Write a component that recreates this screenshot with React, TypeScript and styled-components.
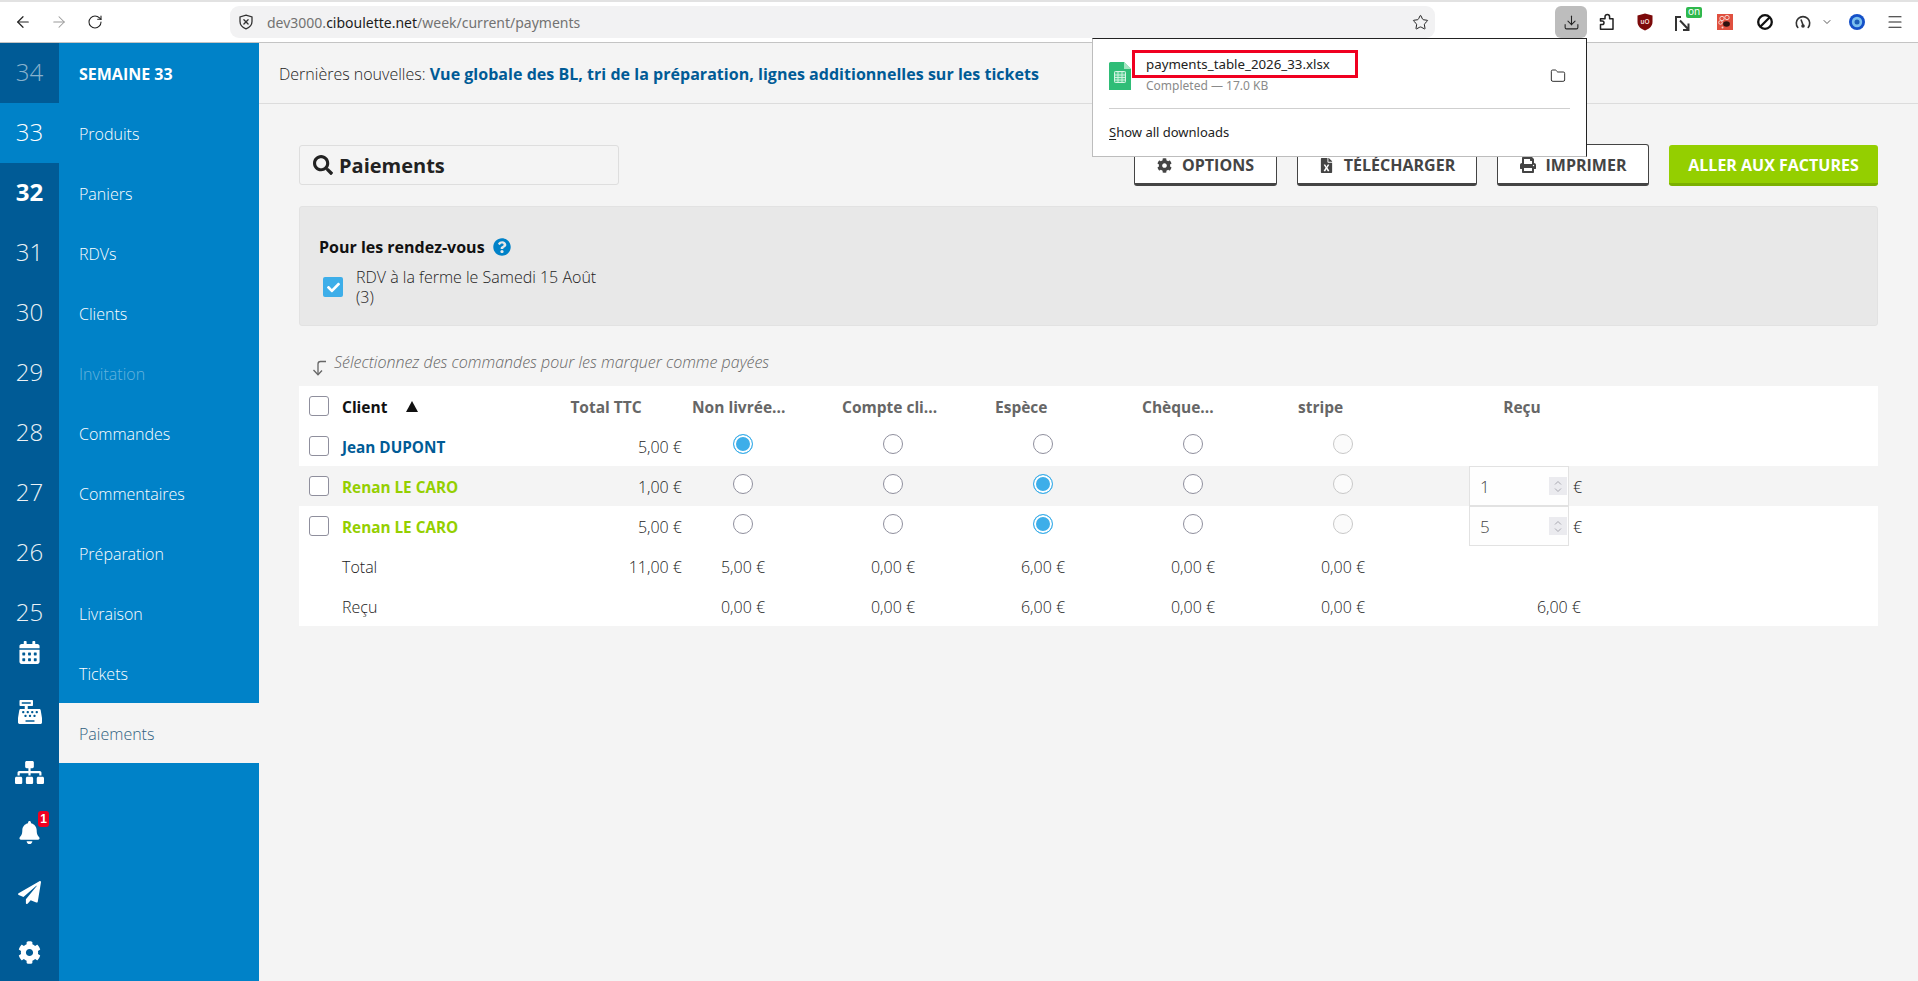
import React from "react";
import styled, { createGlobalStyle } from "styled-components";
import { ArrowLeft, ArrowRight, RotateCw, Star, Download, Folder, Menu, ChevronDown } from "lucide-react";
import { FaCalendarAlt, FaCashRegister, FaSitemap, FaBell, FaPaperPlane, FaCog, FaSearch, FaFileExcel, FaPrint, FaQuestionCircle, FaCheck } from "react-icons/fa";

const Global = createGlobalStyle`
  html, body { margin: 0; padding: 0; height: 100%; overflow: hidden; background: #f4f4f4; }
  * { box-sizing: border-box; }
  body { font-family: "Open Sans", "Noto Sans", sans-serif; color: #333; }
`;

const Page = styled.div`
  position: relative;
  width: 1918px;
  height: 981px;
  overflow: hidden;
  display: flex;
  flex-direction: column;
`;

/* ---------- browser chrome ---------- */
const Chrome = styled.header`
  height: 43px;
  flex: none;
  background: #fff;
  border-top: 2px solid #e2e2e2;
  border-bottom: 1px solid #c4c4c4;
  display: flex;
  align-items: center;
  padding-left: 5px;
  font-family: "Noto Sans", sans-serif;
`;
const NavBtn = styled.div<{ $dim?: boolean }>`
  width: 36px;
  height: 32px;
  display: flex;
  align-items: center;
  justify-content: center;
  color: ${(p) => (p.$dim ? "#9a9a9a" : "#222")};
`;
const UrlBar = styled.div`
  margin-left: 117px;
  width: 1205px;
  height: 32px;
  background: #f2f2f3;
  border-radius: 9px;
  display: flex;
  align-items: center;
  padding: 0 6px 0 8px;
  font-size: 14px;
  color: #727272;
`;
const UrlText = styled.span`
  margin-left: 13px;
  flex: 1;
  b { font-weight: 400; color: #1c1c1c; }
`;
const ToolIcons = styled.div`
  display: flex;
  align-items: center;
  margin-left: 120px;
`;
const DownloadBtn = styled.div`
  width: 32px;
  height: 32px;
  background: #bdbdbd;
  border-radius: 6px;
  display: flex;
  align-items: center;
  justify-content: center;
  color: #222;
`;
const Ext = styled.div<{ $w: number }>`
  position: relative;
  width: ${(p) => p.$w}px;
  height: 32px;
  display: flex;
  align-items: center;
  justify-content: center;
  color: #222;
`;
const OnBadge = styled.span`
  position: absolute;
  right: 5px;
  top: 1px;
  width: 16px;
  height: 11px;
  background: #2fb84c;
  color: #fff;
  font-size: 10px;
  line-height: 9px;
  text-align: center;
  border-radius: 2px;
`;

/* ---------- downloads popup ---------- */
const Popup = styled.div`
  position: absolute;
  left: 1092px;
  top: 38px;
  width: 495px;
  height: 119px;
  background: #fff;
  border: 1px solid #bdbdbd;
  border-top-color: #222;
  border-right-color: #222;
  z-index: 5;
  font-family: "Noto Sans", sans-serif;
  padding: 0 16px;
`;
const DownloadItem = styled.div`
  height: 70px;
  padding-top: 3px;
  display: flex;
  align-items: center;
  border-bottom: 1px solid #cfcfcf;
`;
const SheetSlot = styled.div`
  display: flex;
  margin-top: 2px;
`;
const FileInfo = styled.div`
  margin-left: 15px;
  flex: 1;
  display: flex;
  flex-direction: column;
  gap: 4px;
`;
const FileName = styled.span`
  font-size: 13.3px;
  line-height: 17px;
  color: #222;
`;
const FileMeta = styled.span`
  font-size: 12px;
  line-height: 17px;
  color: #8a8a8a;
`;
const FolderBtn = styled.div`
  width: 16px;
  margin: 2px 4px 0 0;
  display: flex;
  color: #222;
`;
const ShowAll = styled.div`
  margin-top: 14px;
  font-size: 13px;
  line-height: 18px;
  color: #222;
  u { text-underline-offset: 2px; }
`;
const RedBox = styled.div`
  position: absolute;
  left: 1132px;
  top: 50px;
  width: 226px;
  height: 28px;
  border: 3px solid #f00020;
  z-index: 6;
`;

/* ---------- app shell ---------- */
const Body = styled.div`
  flex: 1;
  display: flex;
  min-height: 0;
`;
const WeekRail = styled.aside`
  width: 59px;
  flex: none;
  background: #005b96;
  display: flex;
  flex-direction: column;
`;
const WeekList = styled.div`
  height: 579px;
  flex: none;
  overflow: hidden;
`;
const WeekItem = styled.div<{ $state?: "active" | "bold" | "dim" }>`
  height: 60px;
  padding-bottom: 2px;
  display: flex;
  align-items: center;
  justify-content: center;
  font-size: 24px;
  line-height: 20px;
  font-weight: ${(p) => (p.$state === "bold" ? 700 : 300)};
  color: ${(p) => (p.$state === "dim" ? "rgba(255,255,255,.55)" : "#fff")};
  background: ${(p) => (p.$state === "active" ? "#0082c8" : "transparent")};
  opacity: ${(p) => (p.$state ? 1 : 0.92)};
`;
const RailTool = styled.div`
  position: relative;
  height: 60px;
  flex: none;
  display: flex;
  align-items: center;
  justify-content: center;
  color: #fff;
`;
const Badge = styled.span`
  position: absolute;
  left: 38px;
  top: 9px;
  width: 11px;
  height: 16px;
  border-radius: 3px;
  background: #f00020;
  color: #fff;
  font: 700 12px/16px "Liberation Sans", sans-serif;
  text-align: center;
`;
const NavRail = styled.nav`
  width: 200px;
  flex: none;
  background: #0082c8;
`;
const NavTitle = styled.div`
  height: 60px;
  padding: 2px 0 0 20px;
  display: flex;
  align-items: center;
  font-size: 16px;
  font-weight: 700;
  color: #fff;
`;
const NavItem = styled.div<{ $active?: boolean; $disabled?: boolean }>`
  height: 60px;
  padding: 2px 0 0 20px;
  display: flex;
  align-items: center;
  font-size: 16px;
  font-weight: 300;
  color: ${(p) => (p.$active ? "#2f5f80" : p.$disabled ? "rgba(255,255,255,.4)" : "#fff")};
  background: ${(p) => (p.$active ? "#f4f4f4" : "transparent")};
`;
const Main = styled.main`
  flex: 1;
  min-width: 0;
  background: #f4f4f4;
`;
const NewsBar = styled.div`
  height: 61px;
  padding: 1px 0 0 20px;
  border-bottom: 1px solid #dcdcdc;
  display: flex;
  align-items: center;
  font-size: 16px;
  font-weight: 300;
  color: #222;
  white-space: pre;
  a { font-weight: 700; color: #005b96; letter-spacing: 0.03px; }
`;
const Content = styled.div`
  padding: 40px 40px 0;
`;
const TitleRow = styled.div`
  display: flex;
  align-items: flex-start;
  justify-content: space-between;
`;
const SearchBox = styled.div`
  margin-top: 1px;
  width: 320px;
  height: 40px;
  border: 1px solid #dedede;
  border-radius: 3px;
  background: #f4f4f4;
  display: flex;
  align-items: center;
  gap: 6px;
  padding-left: 13px;
  font-size: 20px;
  font-weight: 700;
  color: #222;
`;
const Actions = styled.div`
  display: flex;
  gap: 20px;
`;
const OutlineBtn = styled.button<{ $w: number }>`
  width: ${(p) => p.$w}px;
  height: 42px;
  background: #fff;
  border: 1px solid #444;
  border-bottom-width: 3px;
  border-radius: 3px;
  display: flex;
  align-items: center;
  justify-content: center;
  gap: 10px;
  font: 700 16px "Open Sans", sans-serif;
  color: #444;
  padding: 2px 0 0;
`;
const GreenBtn = styled.button`
  margin-top: 1px;
  width: 209px;
  height: 41px;
  background: #94cf00;
  border: 0;
  border-bottom: 3px solid #7bb000;
  border-radius: 3px;
  font: 700 16px "Open Sans", sans-serif;
  color: #fff;
  padding: 2px 0 0;
`;
const FilterPanel = styled.section`
  margin-top: 20px;
  height: 120px;
  background: #e8e8e8;
  border: 1px solid #e2e2e2;
  border-radius: 3px;
  padding: 29px 19px 0;
`;
const PanelTitle = styled.div`
  display: flex;
  align-items: center;
  gap: 8px;
  font-size: 16px;
  line-height: 22px;
  font-weight: 700;
  color: #111;
  svg { color: #0082c8; }
`;
const PanelOption = styled.label`
  margin-top: 9px;
  padding-left: 4px;
  display: flex;
  align-items: center;
  gap: 13px;
  font-size: 16px;
  line-height: 20px;
  font-weight: 300;
  color: #222;
`;
const OptionText = styled.span`
  width: 255px;
`;
const BlueCheck = styled.span`
  width: 20px;
  height: 20px;
  flex: none;
  border-radius: 2px;
  background: #3daee9;
  color: #fff;
  display: flex;
  align-items: center;
  justify-content: center;
`;
const Hint = styled.div`
  height: 60px;
  padding: 24px 0 0 12px;
  display: flex;
  align-items: flex-start;
  gap: 7px;
  font-size: 16px;
  line-height: 24px;
  font-style: italic;
  font-weight: 300;
  color: #666;
`;

/* ---------- table ---------- */
const Table = styled.div`
  background: #fff;
`;
const Row = styled.div<{ $shade?: boolean }>`
  height: 40px;
  display: grid;
  grid-template-columns: 43px 188px 138px repeat(5, 150px) 208px;
  align-items: center;
  background: ${(p) => (p.$shade ? "#f4f4f4" : "transparent")};
  font-size: 16px;
  font-weight: 300;
  color: #222;
`;
const CheckCell = styled.div`
  padding-left: 10px;
  display: flex;
`;
const EmptyBox = styled.span`
  width: 20px;
  height: 20px;
  border: 1px solid #8f8f9d;
  border-radius: 3px;
  background: #fff;
`;
const HeadClient = styled.div`
  display: flex;
  align-items: center;
  gap: 19px;
  padding-top: 2px;
  font-weight: 700;
  font-size: 15.5px;
  color: #111;
`;
const SortArrow = styled.span`
  width: 0;
  height: 0;
  margin-top: -2px;
  border-left: 6px solid transparent;
  border-right: 6px solid transparent;
  border-bottom: 11px solid #111;
`;
const HeadCell = styled.div<{ $left?: number }>`
  padding: 2px 0 0 ${(p) => p.$left ?? 0}px;
  text-align: ${(p) => (p.$left === undefined ? "center" : "left")};
  font-weight: 700;
  font-size: 15.5px;
  white-space: nowrap;
  color: #666;
`;
const HeadTotal = styled(HeadCell)`
  padding-left: 14px;
`;
const ClientName = styled.div<{ $green?: boolean }>`
  padding-top: 2px;
  font-weight: 700;
  font-size: 15.3px;
  color: ${(p) => (p.$green ? "#94cf00" : "#005b96")};
`;
const LabelCell = styled.div`
  padding-top: 2px;
`;
const AmountCell = styled.div`
  padding-top: 2px;
  text-align: right;
  margin-right: -14px;
`;
const CenterCell = styled.div`
  padding-top: 2px;
  text-align: center;
`;
const RadioCell = styled.div`
  display: flex;
  justify-content: center;
  margin-bottom: 4px;
`;
const Radio = styled.span<{ $on?: boolean; $off?: boolean }>`
  width: 20px;
  height: 20px;
  border-radius: 50%;
  border: 1px solid ${(p) => (p.$on ? "#3daee9" : p.$off ? "#c8c8c8" : "#8f8f9d")};
  background: ${(p) => (p.$on ? "#3daee9" : p.$off ? "#fbfbfb" : "#fff")};
  box-shadow: ${(p) => (p.$on ? "inset 0 0 0 2px #fff" : "none")};
`;
const ReceivedCell = styled.div`
  height: 40px;
  padding-left: 51px;
  display: flex;
  align-items: center;
  gap: 4px;
`;
const NumberBox = styled.div`
  width: 100px;
  height: 40px;
  background: #fefefe;
  border: 1px solid #e2e2e2;
  display: flex;
  align-items: center;
  justify-content: space-between;
  padding: 0 1px 0 10px;
  font-size: 17px;
  color: #444;
`;
const Spinner = styled.span`
  width: 18px;
  height: 18px;
  background: #ebebef;
  color: #a8a8b0;
  display: flex;
  align-items: center;
  justify-content: center;
`;
const CurrencySign = styled.span`
  padding-top: 2px;
`;
const ReceivedTotal = styled.div`
  padding: 2px 45px 0 0;
  text-align: right;
`;

const ShieldX = () => (
  <svg width="16" height="16" viewBox="0 0 16 16" fill="none" stroke="#333" strokeWidth="1.3">
    <path d="M8 1.2 14 3v4.6c0 3.4-2.6 5.9-6 7.2-3.4-1.3-6-3.8-6-7.2V3z" />
    <path d="M5.9 5.8l4.2 4.2M10.1 5.8l-4.2 4.2" strokeLinecap="round" />
  </svg>
);
const PuzzleIcon = () => (
  <svg width="18" height="18" viewBox="0 0 18 18" fill="none" stroke="#222" strokeWidth="1.5" strokeLinejoin="round">
    <path d="M2.500 16.200V11.500H4.200a1.800 1.800 0 0 0 0-3.600H2.500V5.700H7V3.700a2.300 2.300 0 0 1 4.600 0V5.700H15V16.200Z" />
  </svg>
);
const UBlock = () => (
  <svg width="16" height="18" viewBox="0 0 16 18">
    <path d="M8 .5 15.500 2.600V9c0 4-3.200 7-7.500 8.500C3.700 16 .5 13 .5 9V2.600z" fill="#7c0a0a" />
    <text x="8" y="10.500" textAnchor="middle" fontSize="6.500" fontWeight="700" fill="#f2d8d8" fontFamily="Liberation Sans">uO</text>
  </svg>
);
const CursorOn = () => (
  <svg width="18" height="18" viewBox="0 0 18 18" fill="none" stroke="#333" strokeWidth="2" style={{ marginRight: 4, marginTop: 2 }}>
    <path d="M2 17V3h5" />
    <path d="M6 6.500l8 8.500M14.500 9.500v6.500H9" />
  </svg>
);
const BeeSquare = () => (
  <svg width="16" height="16" viewBox="0 0 16 16">
    <rect width="16" height="16" fill="#e0503f" />
    <circle cx="5" cy="4.500" r="2.200" fill="none" stroke="#f6d4ce" strokeWidth="1" />
    <circle cx="10" cy="3.500" r="2.200" fill="none" stroke="#f6d4ce" strokeWidth="1" />
    <circle cx="3.500" cy="8.500" r="1.800" fill="none" stroke="#f6d4ce" strokeWidth="1" />
    <ellipse cx="9.500" cy="10" rx="3.400" ry="2.800" fill="#2e1210" />
    <circle cx="5.500" cy="13.500" r="1" fill="#f6d4ce" />
  </svg>
);
const BanIcon = () => (
  <svg width="18" height="18" viewBox="0 0 18 18" fill="none" stroke="#111" strokeWidth="2.300">
    <circle cx="9" cy="9" r="6.800" />
    <path d="M4.500 13.500 13.500 4.500" />
  </svg>
);
const Gauge = () => (
  <svg width="16" height="16" viewBox="0 0 16 16" fill="none" stroke="#333" strokeWidth="1.600">
    <path d="M2.800 13.500A6.700 6.700 0 1 1 13.200 13.500" strokeLinecap="round" />
    <path d="M6 5.500 8 11" />
    <circle cx="8" cy="12" r="1.800" fill="#333" stroke="none" />
  </svg>
);
const BlueEye = () => (
  <svg width="16" height="16" viewBox="0 0 16 16">
    <circle cx="8" cy="8" r="8" fill="#1450c8" />
    <circle cx="8" cy="8" r="5.200" fill="#7cc0ee" />
    <circle cx="8" cy="8" r="2.500" fill="#1d5fb8" />
  </svg>
);
const Sheet = () => (
  <svg width="22" height="28" viewBox="0 0 22 28">
    <path d="M0 1.500A1.500 1.500 0 0 1 1.500 0H15l7 7v21H0z" fill="#2fbd77" />
    <path d="M15 0l7 7h-7z" fill="#a5e6c2" />
    <rect x="5.500" y="9.500" width="11" height="11" rx=".8" fill="#57cc92" stroke="#d8f5e5" strokeWidth="1" />
    <path d="M5.500 13h11M5.500 15.500h11M5.500 18h11M9 9.500v11M13 9.500v11" stroke="#d8f5e5" strokeWidth=".9" />
  </svg>
);
const HintArrow = () => (
  <svg width="16" height="16" viewBox="0 0 16 16" fill="none" stroke="#666" strokeWidth="1.300" style={{ marginTop: 10 }}>
    <path d="M15 1.500H9.500Q7 1.500 7 4v10.500" />
    <path d="M2.500 10 7 14.800 11 10.500" />
  </svg>
);
const Chevrons = () => (
  <svg width="10" height="15" viewBox="0 0 10 15" fill="none" stroke="currentColor" strokeWidth="1">
    <path d="M2 5.500 5 2.500 8 5.500M2 9.500 5 12.500 8 9.500" />
  </svg>
);

const weeks: { n: number; s?: "active" | "bold" | "dim" }[] = [
  { n: 34, s: "dim" }, { n: 33, s: "active" }, { n: 32, s: "bold" }, { n: 31 }, { n: 30 },
  { n: 29 }, { n: 28 }, { n: 27 }, { n: 26 }, { n: 25 },
];
const navItems = ["Produits", "Paniers", "RDVs", "Clients", "Invitation", "Commandes", "Commentaires", "Préparation", "Livraison", "Tickets", "Paiements"];

const rows = [
  { name: "Jean DUPONT", green: false, total: "5,00 €", checked: 0, recv: "" },
  { name: "Renan LE CARO", green: true, total: "1,00 €", checked: 2, recv: "1" },
  { name: "Renan LE CARO", green: true, total: "5,00 €", checked: 2, recv: "5" },
];
const heads = [
  { label: "Non livrée...", left: 24 },
  { label: "Compte cli...", left: 24 },
  { label: "Espèce", left: 27 },
  { label: "Chèque...", left: 24 },
  { label: "stripe", left: 30 },
];

export default function App() {
  return (
    <Page>
      <Global />
      <Chrome>
        <NavBtn><ArrowLeft size={18} strokeWidth={1.6} /></NavBtn>
        <NavBtn $dim><ArrowRight size={18} strokeWidth={1.4} /></NavBtn>
        <NavBtn><RotateCw size={16} strokeWidth={1.6} /></NavBtn>
        <UrlBar>
          <ShieldX />
          <UrlText>dev3000.<b>ciboulette.net</b>/week/current/payments</UrlText>
          <Star size={17} strokeWidth={1.4} color="#222" />
        </UrlBar>
        <ToolIcons>
          <DownloadBtn><Download size={17} strokeWidth={1.5} /></DownloadBtn>
          <Ext $w={40}><PuzzleIcon /></Ext>
          <Ext $w={36}><UBlock /></Ext>
          <Ext $w={44}><CursorOn /><OnBadge>on</OnBadge></Ext>
          <Ext $w={36}><BeeSquare /></Ext>
          <Ext $w={44}><BanIcon /></Ext>
          <Ext $w={32}><Gauge /></Ext>
          <Ext $w={16}><ChevronDown size={12} strokeWidth={1.5} /></Ext>
          <Ext $w={44}><BlueEye /></Ext>
          <Ext $w={32}><Menu size={18} strokeWidth={1.5} /></Ext>
        </ToolIcons>
      </Chrome>

      <Popup>
        <DownloadItem>
          <SheetSlot><Sheet /></SheetSlot>
          <FileInfo>
            <FileName>payments_table_2026_33.xlsx</FileName>
            <FileMeta>Completed — 17.0 KB</FileMeta>
          </FileInfo>
          <FolderBtn><Folder size={16} strokeWidth={1.4} /></FolderBtn>
        </DownloadItem>
        <ShowAll><u>S</u>how all downloads</ShowAll>
      </Popup>
      <RedBox />

      <Body>
        <WeekRail>
          <WeekList>
            {weeks.map((w) => <WeekItem key={w.n} $state={w.s}>{w.n}</WeekItem>)}
          </WeekList>
          <RailTool><FaCalendarAlt size={23} /></RailTool>
          <RailTool><FaCashRegister size={24} /></RailTool>
          <RailTool><FaSitemap size={29} /></RailTool>
          <RailTool><FaBell size={23} /><Badge>1</Badge></RailTool>
          <RailTool><FaPaperPlane size={23} /></RailTool>
          <RailTool><FaCog size={23} /></RailTool>
        </WeekRail>
        <NavRail>
          <NavTitle>SEMAINE 33</NavTitle>
          {navItems.map((n) => (
            <NavItem key={n} $active={n === "Paiements"} $disabled={n === "Invitation"}>{n}</NavItem>
          ))}
        </NavRail>
        <Main>
          <NewsBar>Dernières nouvelles: <a>Vue globale des BL, tri de la préparation, lignes additionnelles sur les tickets</a></NewsBar>
          <Content>
            <TitleRow>
              <SearchBox><FaSearch size={20} />Paiements</SearchBox>
              <Actions>
                <OutlineBtn $w={143}><FaCog size={15} />OPTIONS</OutlineBtn>
                <OutlineBtn $w={180}><FaFileExcel size={15} />TÉLÉCHARGER</OutlineBtn>
                <OutlineBtn $w={152}><FaPrint size={16} />IMPRIMER</OutlineBtn>
                <GreenBtn>ALLER AUX FACTURES</GreenBtn>
              </Actions>
            </TitleRow>
            <FilterPanel>
              <PanelTitle>Pour les rendez-vous <FaQuestionCircle size={18} /></PanelTitle>
              <PanelOption>
                <BlueCheck><FaCheck size={13} /></BlueCheck>
                <OptionText>RDV à la ferme le Samedi 15 Août (3)</OptionText>
              </PanelOption>
            </FilterPanel>
            <Hint><HintArrow />Sélectionnez des commandes pour les marquer comme payées</Hint>
            <Table>
              <Row>
                <CheckCell><EmptyBox /></CheckCell>
                <HeadClient>Client <SortArrow /></HeadClient>
                <HeadTotal>Total TTC</HeadTotal>
                {heads.map((h) => <HeadCell key={h.label} $left={h.left}>{h.label}</HeadCell>)}
                <HeadCell>Reçu</HeadCell>
              </Row>
              {rows.map((r, i) => (
                <Row key={i} $shade={i === 1}>
                  <CheckCell><EmptyBox /></CheckCell>
                  <ClientName $green={r.green}>{r.name}</ClientName>
                  <AmountCell>{r.total}</AmountCell>
                  {heads.map((h, c) => (
                    <RadioCell key={h.label}><Radio $on={c === r.checked} $off={c === 4} /></RadioCell>
                  ))}
                  {r.recv ? (
                    <ReceivedCell>
                      <NumberBox>{r.recv}<Spinner><Chevrons /></Spinner></NumberBox>
                      <CurrencySign>€</CurrencySign>
                    </ReceivedCell>
                  ) : <div />}
                </Row>
              ))}
              <Row>
                <div />
                <LabelCell>Total</LabelCell>
                <AmountCell>11,00 €</AmountCell>
                {["5,00 €", "0,00 €", "6,00 €", "0,00 €", "0,00 €"].map((v, i) => <CenterCell key={i}>{v}</CenterCell>)}
                <div />
              </Row>
              <Row>
                <div />
                <LabelCell>Reçu</LabelCell>
                <div />
                {["0,00 €", "0,00 €", "6,00 €", "0,00 €", "0,00 €"].map((v, i) => <CenterCell key={i}>{v}</CenterCell>)}
                <ReceivedTotal>6,00 €</ReceivedTotal>
              </Row>
            </Table>
          </Content>
        </Main>
      </Body>
    </Page>
  );
}
